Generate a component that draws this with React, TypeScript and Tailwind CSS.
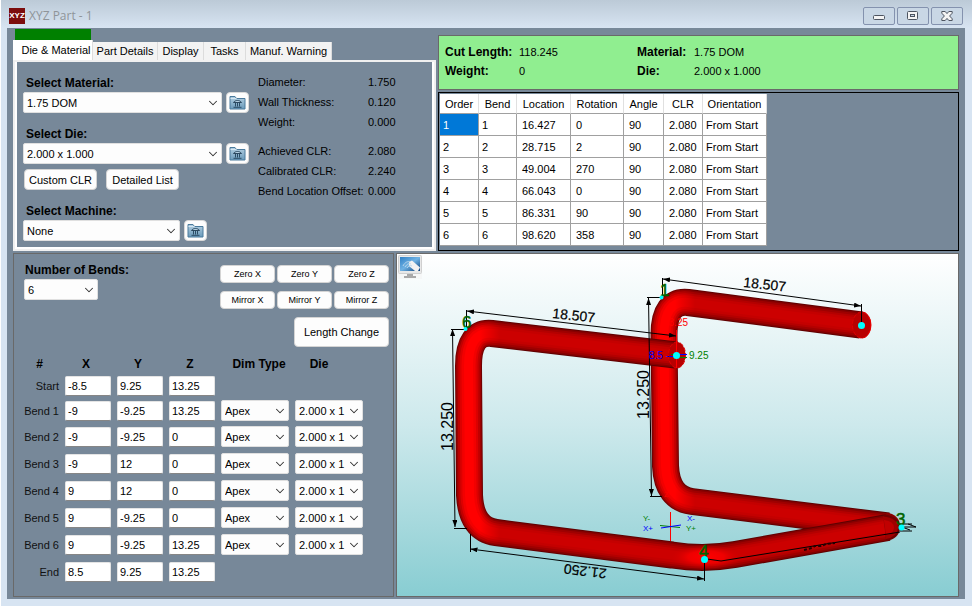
import React, { useState } from "react";
import { ChevronDown } from "lucide-react";

const TABS = [
  { name: "Die & Material", width: "w-20" },
  { name: "Part Details", width: "w-[65px]" },
  { name: "Display", width: "w-[46px]" },
  { name: "Tasks", width: "w-[42px]" },
  { name: "Manuf. Warning", width: "w-[86px]" },
];

const ORDER_HEADERS = [
  { name: "Order", width: "w-[39px]" },
  { name: "Bend", width: "w-[38px]" },
  { name: "Location", width: "w-[54px]" },
  { name: "Rotation", width: "w-[53px]" },
  { name: "Angle", width: "w-[40px]" },
  { name: "CLR", width: "w-[39px]" },
  { name: "Orientation", width: "w-[64px]" },
];

const ORDER_ROWS = [
  ["1", "1", "16.427", "0", "90", "2.080", "From Start"],
  ["2", "2", "28.715", "2", "90", "2.080", "From Start"],
  ["3", "3", "49.004", "270", "90", "2.080", "From Start"],
  ["4", "4", "66.043", "0", "90", "2.080", "From Start"],
  ["5", "5", "86.331", "90", "90", "2.080", "From Start"],
  ["6", "6", "98.620", "358", "90", "2.080", "From Start"],
];

const BENDS = [
  { label: "Start", xyz: ["-8.5", "9.25", "13.25"], height: "h-[25px]" },
  { label: "Bend 1", xyz: ["-9", "-9.25", "13.25"], height: "h-[25px]", typed: true },
  { label: "Bend 2", xyz: ["-9", "-9.25", "0"], height: "h-[27px]", typed: true },
  { label: "Bend 3", xyz: ["-9", "12", "0"], height: "h-[27px]", typed: true },
  { label: "Bend 4", xyz: ["9", "12", "0"], height: "h-[27px]", typed: true },
  { label: "Bend 5", xyz: ["9", "-9.25", "0"], height: "h-[27px]", typed: true },
  { label: "Bend 6", xyz: ["9", "-9.25", "13.25"], height: "h-[27px]", typed: true },
  { label: "End", xyz: ["8.5", "9.25", "13.25"], height: "h-[27px]" },
];

const MATERIAL_INFO = [
  ["Diameter:", "1.750"],
  ["Wall Thickness:", "0.120"],
  ["Weight:", "0.000"],
];

const CLR_INFO = [
  ["Achieved CLR:", "2.080"],
  ["Calibrated CLR:", "2.240"],
  ["Bend Location Offset:", "0.000"],
];

type ComboProps = {
  id?: string;
  label?: string;
  options: string[];
  width: string;
};

const Combo: React.FC<ComboProps> = ({ id, label, options, width }) => (
  <span className={`relative block ${width}`}>
    <select
      id={id}
      aria-label={label}
      className="block h-[21px] w-full appearance-none rounded-xs border border-[#e0e0e0] bg-[#fdfdfd] pl-[3px] pr-4 outline-none"
    >
      {options.map((o) => (
        <option key={o}>{o}</option>
      ))}
    </select>
    <ChevronDown
      size={14}
      strokeWidth={1.8}
      className="pointer-events-none absolute right-[2px] top-1 text-[#333]"
    />
  </span>
);

const LibraryButton: React.FC<{ label: string }> = ({ label }) => (
  <button
    aria-label={label}
    className="flex h-[21px] w-[23px] items-center justify-center rounded border border-[#d8d8d8] bg-[#fdfdfd]"
  >
    <svg width="17" height="15" viewBox="0 0 17 15">
      <defs>
        <linearGradient id="folder" x1="0" y1="0" x2="0" y2="1">
          <stop offset="0" stopColor="#b4d0e2" />
          <stop offset="1" stopColor="#6a9aba" />
        </linearGradient>
      </defs>
      <path d="M1 1.5h5l1.5 2H16v10.5H1z" fill="url(#folder)" stroke="#4a7a9c" />
      <path d="M1.5 3.5h6" stroke="#d5e6f1" />
      <path d="M4.500 7.500C5.500 6 7 5.500 8.500 5.500s3 .5 4 2z" fill="#b7d3e5" stroke="#1d3b52" strokeWidth=".9" />
      <path d="M6.500 8v3.500M8.500 8v3.500M10.500 8v3.500M4.500 12.300h8" stroke="#2b4d66" fill="none" />
    </svg>
  </button>
);

const PlainButton: React.FC<{ className: string; children: React.ReactNode }> = ({
  className,
  children,
}) => (
  <button
    className={`rounded border border-[#d4d4d4] bg-[#fdfdfd] whitespace-nowrap hover:bg-[#e5f1fb] ${className}`}
  >
    {children}
  </button>
);

const InfoList: React.FC<{ rows: string[][] }> = ({ rows }) => (
  <dl className="grid grid-cols-[110px_auto] leading-5">
    {rows.map(([name, value]) => (
      <React.Fragment key={name}>
        <dt className="whitespace-nowrap">{name}</dt>
        <dd>{value}</dd>
      </React.Fragment>
    ))}
  </dl>
);

const TitleBar: React.FC = () => (
  <header className="flex h-7 items-center bg-linear-to-b from-[#bccad7] to-[#d7e4f2] pl-2 pr-[9px] pt-1">
    <span className="flex size-4 items-center justify-center bg-[#7c0d0d] text-[8px] font-bold text-white">
      XYZ
    </span>
    <h1 className="ml-1 flex-1 font-['Open_Sans'] text-xs text-[#8f9499]">XYZ Part - 1</h1>
    <div className="flex gap-[2px]">
      <button
        aria-label="Minimize"
        className="flex h-[18px] w-8 items-center justify-center rounded-xs border border-[#8492ae] bg-[#c9d7e5]"
      >
        <svg width="12" height="12" viewBox="0 0 12 12">
          <rect x=".5" y="5.500" width="11" height="4" rx="1" fill="#f4f4f4" stroke="#4d5460" />
        </svg>
      </button>
      <button
        aria-label="Maximize"
        className="flex h-[18px] w-8 items-center justify-center rounded-xs border border-[#8492ae] bg-[#c9d7e5]"
      >
        <svg width="12" height="12" viewBox="0 0 12 12">
          <rect x=".5" y="1.500" width="10" height="8" rx="1" fill="#f4f4f4" stroke="#4d5460" />
          <rect x="3.500" y="4.500" width="4" height="2" fill="#c9d7e5" stroke="#4d5460" />
        </svg>
      </button>
      <button
        aria-label="Close"
        className="flex h-[18px] w-8 items-center justify-center rounded-xs border border-[#8492ae] bg-[#c9d7e5]"
      >
        <svg width="12" height="12" viewBox="0 0 12 12">
          <path
            d="M.8 1.500h3.400L6 3.600l1.800-2.100h3.400v1.700L8.600 6l2.600 2.800v1.700H7.800L6 8.400l-1.800 2.100H.8V8.800L3.400 6 .8 3.200z"
            fill="#f4f4f4"
            stroke="#4d5460"
          />
        </svg>
      </button>
    </div>
  </header>
);

const DieMaterialPage: React.FC = () => (
  <section className="border-2 border-[#f0f0f0] bg-white p-[2px] pt-0">
    <div className="flex gap-[9px] bg-[#778899] pb-[6px] pl-[6px]">
      <div className="w-[226px] pt-[13px]">
        <label htmlFor="material" className="block pl-[3px] text-xs/[17px] font-bold">
          Select Material:
        </label>
        <div className="flex gap-1">
          <Combo id="material" options={["1.75 DOM"]} width="w-[199px]" />
          <LibraryButton label="Material library" />
        </div>

        <label htmlFor="die" className="mt-[13px] block pl-[3px] text-xs/[17px] font-bold">
          Select Die:
        </label>
        <div className="flex gap-1">
          <Combo id="die" options={["2.000 x 1.000"]} width="w-[199px]" />
          <LibraryButton label="Die library" />
        </div>
        <div className="mt-[5px] flex gap-[9px] pl-px">
          <PlainButton className="h-[21px] w-[73px]">Custom CLR</PlainButton>
          <PlainButton className="h-[21px] w-[73px]">Detailed List</PlainButton>
        </div>

        <label htmlFor="machine" className="mt-[13px] block pl-[3px] text-xs/[17px] font-bold">
          Select Machine:
        </label>
        <div className="flex gap-1">
          <Combo id="machine" options={["None"]} width="w-[157px]" />
          <LibraryButton label="Machine library" />
        </div>
      </div>

      <div className="flex flex-col gap-[9px] pt-[10px]">
        <InfoList rows={MATERIAL_INFO} />
        <InfoList rows={CLR_INFO} />
      </div>
    </div>
  </section>
);

const SetupTabs: React.FC = () => {
  const [active, setActive] = useState(0);

  return (
    <div className="w-[423px] shrink-0 pt-px">
      <div className="ml-[2px] h-[11px] w-[76px] bg-[#008000]" />
      <div role="tablist" className="flex items-end">
        {TABS.map((tab, i) => (
          <button
            key={tab.name}
            role="tab"
            aria-selected={active === i}
            onClick={() => setActive(i)}
            className={`border-r border-[#dcdcdc] whitespace-nowrap ${tab.width} ${
              active === i ? "h-5 bg-white pl-[7px]" : "h-[18px] bg-[#f3f3f3]"
            }`}
          >
            {tab.name}
          </button>
        ))}
      </div>
      <DieMaterialPage />
    </div>
  );
};

const Summary: React.FC = () => (
  <dl className="grid h-[55px] grid-cols-[74px_118px_57px_1fr] content-start border border-[#696969] bg-[#90ee90] pl-[6px] pt-[7px] leading-[19px]">
    <dt className="text-xs/[19px] font-bold">Cut Length:</dt>
    <dd>118.245</dd>
    <dt className="text-xs/[19px] font-bold">Material:</dt>
    <dd>1.75 DOM</dd>
    <dt className="text-xs/[19px] font-bold">Weight:</dt>
    <dd>0</dd>
    <dt className="text-xs/[19px] font-bold">Die:</dt>
    <dd>2.000 x 1.000</dd>
  </dl>
);

const OrderTable: React.FC = () => (
  <div className="flex-1 border border-black p-px">
    <table className="w-[327px] table-fixed border-separate border-spacing-0 bg-white">
      <thead>
        <tr className="h-5">
          {ORDER_HEADERS.map((h) => (
            <th
              key={h.name}
              className={`border-b border-r border-b-[#a0a0a0] border-r-[#e0e0e0] p-0 text-center font-normal ${h.width}`}
            >
              {h.name}
            </th>
          ))}
        </tr>
      </thead>
      <tbody>
        {ORDER_ROWS.map((row, r) => (
          <tr key={r} className="h-[22px]">
            {row.map((cell, c) => (
              <td
                key={c}
                className={`border-b border-r border-[#a0a0a0] py-0 pr-0 whitespace-nowrap ${
                  c > 1 && c < 6 ? "pl-[5px]" : "pl-[3px]"
                } ${r === 0 && c === 0 ? "bg-[#0078d7] text-white" : ""}`}
              >
                {cell}
              </td>
            ))}
          </tr>
        ))}
      </tbody>
    </table>
  </div>
);

const BendPanel: React.FC = () => (
  <section className="w-[381px] shrink-0 border border-[#696969]">
    <div className="flex justify-between pl-[10px] pr-1">
      <div className="pt-2">
        <label htmlFor="bends" className="block pl-px text-xs/[17px] font-bold">
          Number of Bends:
        </label>
        <Combo id="bends" options={["6"]} width="w-[74px]" />
      </div>
      <div className="grid grid-cols-3 gap-x-[2px] gap-y-2 pt-[11px]">
        {["Zero X", "Zero Y", "Zero Z", "Mirror X", "Mirror Y", "Mirror Z"].map((name) => (
          <PlainButton key={name} className="h-[18px] w-[55px] text-[9px]">
            {name}
          </PlainButton>
        ))}
        <PlainButton className="col-span-3 h-[30px] w-[95px] justify-self-end">
          Length Change
        </PlainButton>
      </div>
    </div>

    <table className="ml-1 mt-2 table-fixed border-separate border-spacing-x-[6px] border-spacing-y-0">
      <thead>
        <tr className="h-[18px] text-xs">
          <th className="w-[35px] p-0 pr-1">#</th>
          <th className="w-[46px] p-0 pr-1">X</th>
          <th className="w-[46px] p-0 pr-1">Y</th>
          <th className="w-[46px] p-0 pr-1">Z</th>
          <th className="w-[68px] p-0 pl-2 whitespace-nowrap">Dim Type</th>
          <th className="w-[68px] p-0 pr-5">Die</th>
        </tr>
      </thead>
      <tbody>
        {BENDS.map((bend) => (
          <tr key={bend.label} className={bend.height}>
            <th scope="row" className="p-0 text-right font-normal whitespace-nowrap text-[#111]">
              {bend.label}
            </th>
            {bend.xyz.map((value, i) => (
              <td key={i} className="p-0">
                <input
                  type="text"
                  defaultValue={value}
                  aria-label={`${bend.label} ${"XYZ"[i]}`}
                  className="block h-5 w-[46px] rounded-xs border border-b-[#868686] border-[#e4e4e4] bg-white px-[2px] outline-none"
                />
              </td>
            ))}
            {bend.typed && (
              <>
                <td className="p-0">
                  <Combo label={`${bend.label} dim type`} options={["Apex"]} width="w-[68px]" />
                </td>
                <td className="p-0">
                  <Combo label={`${bend.label} die`} options={["2.000 x 1"]} width="w-[68px]" />
                </td>
              </>
            )}
          </tr>
        ))}
      </tbody>
    </table>
  </section>
);

// nested strokes from the dark edge to the lit middle of the tube
const SHADES = [
  { width: 27, side: "#700000", top: "#5e0000" },
  { width: 25, side: "#9c0000", top: "#840000" },
  { width: 22, side: "#c00000", top: "#9e0000" },
  { width: 18, side: "#dc0000", top: "#b40000" },
  { width: 14, side: "#f20000", top: "#c40000" },
  { width: 9, side: "#ff0000", top: "#cc0000" },
];

const Tube: React.FC<{ id: string; d: string; litTo: number }> = ({ id, d, litTo }) => (
  <g fill="none" strokeLinejoin="round">
    {SHADES.map((s, i) => (
      <React.Fragment key={s.width}>
        <linearGradient
          id={`${id}${i}`}
          gradientUnits="userSpaceOnUse"
          x1={litTo}
          x2={litTo + 20}
          y1="0"
          y2="0"
        >
          <stop offset="0" stopColor={s.side} />
          <stop offset="1" stopColor={s.top} />
        </linearGradient>
        <path d={d} stroke={`url(#${id}${i})`} strokeWidth={s.width} />
      </React.Fragment>
    ))}
  </g>
);

const PartView: React.FC = () => (
  <section className="relative min-h-[344px] flex-1 border border-[#696969] bg-linear-to-b from-white via-[#cde9ec] to-[#88cdd2]">
    <svg
      viewBox="397 254 561 342"
      preserveAspectRatio="xMidYMid meet"
      className="absolute inset-0 size-full"
      fontFamily="'Liberation Sans', sans-serif"
    >
      <defs>
        <radialGradient id="elbow">
          <stop offset="0" stopColor="#ff0000" />
          <stop offset=".5" stopColor="#f80000" stopOpacity=".8" />
          <stop offset="1" stopColor="#cc0000" stopOpacity="0" />
        </radialGradient>
        <marker id="tip" viewBox="0 0 7 5" refX="7" refY="2.500" markerWidth="7" markerHeight="5" orient="auto-start-reverse">
          <path d="M0 0 7 2.500 0 5z" />
        </marker>
      </defs>

      {/* rear leg */}
      <ellipse cx="862" cy="325" rx="9" ry="13" fill="#c00000" stroke="#f00000" />
      <Tube
        id="rear"
        litTo={675}
        d="M861 325 L688 302.500 Q664 300 664 335 L665.500 466 Q667 498 692 501.500 L888 526"
      />
      <ellipse cx="861.500" cy="325" rx="9" ry="13" fill="#b80000" stroke="#e00000" strokeDasharray="4 2" />
      <circle cx="887" cy="526" r="13" fill="#8a0000" />

      {/* front leg, from bend 3 round to the free end */}
      <Tube
        id="front"
        litTo={480}
        d="M888 527.500 L735 554.500 Q704 560 672 555 L496 532.500 Q471 529 469.500 495 L468.500 366 Q468.500 331 492 333.500 L676 355"
      />
      <path d="M884 514.500 Q900 516 900 528 Q899 539 886 541z" fill="#700000" />
      <path d="M883 516.500 Q898 518 898 528 Q897 537 886 539z" fill="#a00000" />
      <path d="M884 520 Q894 521 894 528 Q893 534 886 535z" fill="#c00000" />
      <ellipse cx="706" cy="557" rx="36" ry="12.500" fill="url(#elbow)" />
      <ellipse cx="677" cy="355" rx="8.500" ry="13" fill="#b80000" stroke="#e00000" strokeDasharray="4 2" />

      {/* dimension lines */}
      <g stroke="#000" fill="none">
        <path d="M467 311 L676 336" markerStart="url(#tip)" markerEnd="url(#tip)" />
        <path d="M466.500 310v18M676.500 334v20" />
        <path d="M663 279 L861 306" markerStart="url(#tip)" markerEnd="url(#tip)" />
        <path d="M662.500 278v17M861.500 304v20" />
        <path d="M452.500 329 L455 527" markerStart="url(#tip)" markerEnd="url(#tip)" />
        <path d="M451 329.500h15M454 528.500h13" />
        <path d="M648.500 298 L651.500 496" markerStart="url(#tip)" markerEnd="url(#tip)" />
        <path d="M647 297.500h14M650 496.500h12" />
        <path d="M470.500 549 L704 579" markerStart="url(#tip)" markerEnd="url(#tip)" />
        <path d="M470.500 534v18M704.500 562v19" />
        <path d="M707 559l14 2 179-29" />
        <path d="M902 527h14l-8-3M902 527l8 3M900 524h12M900 531h12" />
      </g>
      <path d="M804 550l8-2 3-2 6 0 5-2 9-1" fill="none" stroke="#200" strokeWidth="2" strokeDasharray="3 2" />

      <g fontSize="14" fill="#000" stroke="#000" strokeWidth=".2">
        <text transform="translate(552 318) rotate(6)">18.507</text>
        <text transform="translate(743 287) rotate(6)">18.507</text>
        <text transform="translate(607 569) rotate(187)">21.250</text>
      </g>
      <g fontSize="16" fill="#000">
        <text transform="translate(453 451) rotate(-90)">13.250</text>
        <text transform="translate(649 419) rotate(-90)">13.250</text>
      </g>

      <g fontSize="17" fill="#006400" stroke="#006400" strokeWidth=".5">
        <text x="462" y="328">6</text>
        <text x="660" y="296">1</text>
        <text x="699" y="557">4</text>
        <text x="896" y="525">3</text>
      </g>

      {/* end point readout */}
      <g fontSize="10">
        <text x="663" y="326" fill="#ff0000">13.25</text>
        <text x="649" y="359" fill="#0000ff">8.5 -</text>
        <text x="689" y="359" fill="#008000">9.25</text>
      </g>
      <path d="M676.500 330v38" stroke="#f00" />
      <path d="M669 356.500h7M677 354.500h10" stroke="#00f" />
      <path d="M671 354.500h5M678 357.500h9" stroke="#008000" />

      {/* axes */}
      <path d="M670.500 512v29" stroke="#f00" />
      <path d="M660 525.500l20 2" stroke="#008000" />
      <path d="M661 528l20-3" stroke="#00f" />
      <g fontSize="8">
        <text x="664" y="497" fill="#ff0000">Z+</text>
        <text x="643" y="521" fill="#008000">Y-</text>
        <text x="643" y="531" fill="#0000ff">X+</text>
        <text x="687" y="521" fill="#0000ff">X-</text>
        <text x="686" y="531" fill="#008000">Y+</text>
      </g>

      <g fill="#00ffff">
        <circle cx="676.500" cy="355.500" r="3.500" />
        <circle cx="861.500" cy="325.500" r="3.500" />
        <circle cx="704.500" cy="559.500" r="3.500" />
        <circle cx="901.500" cy="527.500" r="3" />
        <circle cx="465.500" cy="329" r="2" />
        <circle cx="661.500" cy="297.500" r="2" />
      </g>
    </svg>

    <button aria-label="Render view" className="absolute left-px top-px size-6 bg-[#f4f4f4]/60">
      <svg width="24" height="24" viewBox="0 0 24 24">
        <defs>
          <linearGradient id="screen" x1="0" y1="0" x2="1" y2="1">
            <stop offset="0" stopColor="#2f7fc4" />
            <stop offset=".5" stopColor="#6fb2e4" />
            <stop offset="1" stopColor="#0c3f78" />
          </linearGradient>
        </defs>
        <rect x=".5" y=".5" width="23" height="18" rx="1" fill="#e8e8e8" stroke="#d0d0d0" />
        <rect x="2" y="2" width="20" height="14" fill="url(#screen)" />
        <path d="M11 7l3-1.500 8 7-2 3.500h-3l-6-5z" fill="#f2f2f2" />
        <path d="M5 11c2-4 5-5 7-4M7 12c2-3 4-4 6-3M9 13c1-2 3-3 5-2" stroke="#bcd8ec" fill="none" />
        <path d="M9 19h6v2h3v2H6v-2h3z" fill="#a9a9a9" />
      </svg>
    </button>
  </section>
);

const App: React.FC = () => {
  return (
    <div className="flex min-h-screen flex-col border-l border-white bg-[#d7e4f2] font-['Liberation_Sans',Arial,sans-serif] text-[11px] leading-4 text-black">
      <TitleBar />
      <main className="mb-[7px] ml-[6px] mr-[7px] flex flex-1 flex-col gap-[2px] bg-[#778899] px-[6px] pb-[2px]">
        <div className="flex gap-[2px]">
          <SetupTabs />
          <div className="flex min-w-0 flex-1 flex-col gap-[2px] pt-[7px]">
            <Summary />
            <OrderTable />
          </div>
        </div>
        <div className="flex flex-1 gap-[2px]">
          <BendPanel />
          <PartView />
        </div>
      </main>
    </div>
  );
};

export default App;
